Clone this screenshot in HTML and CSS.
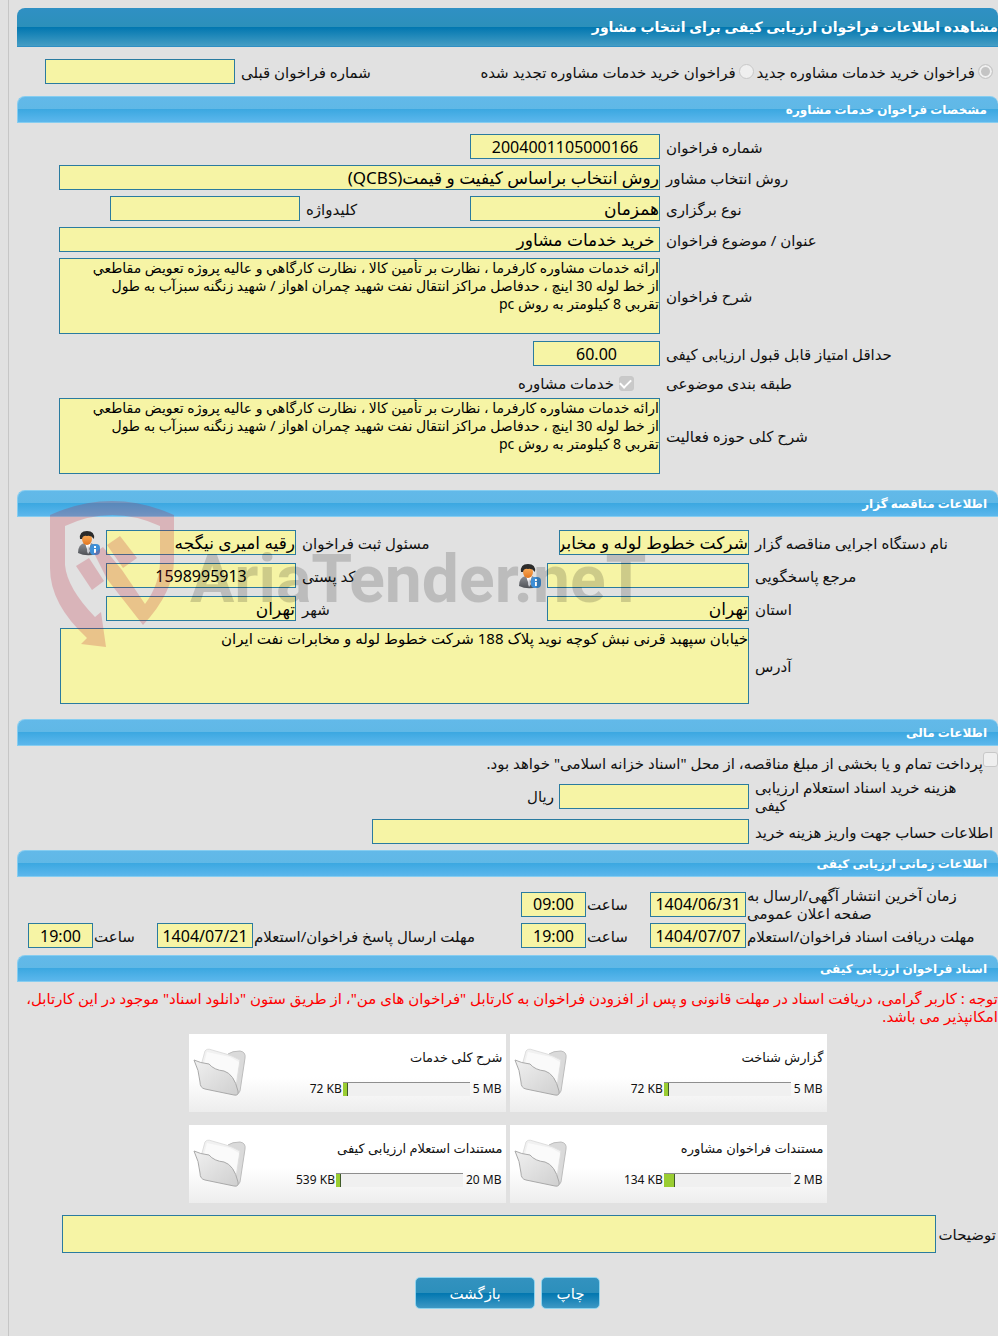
FILE: index.html
```html
<!DOCTYPE html>
<html lang="fa" dir="rtl">
<head>
    <meta charset="UTF-8">
    <meta name="viewport" content="width=device-width, initial-scale=1.0">
    <title>مشاهده اطلاعات فراخوان ارزیابی کیفی</title>
    <link rel="stylesheet" href="styles.css">
</head>
<body>
    <!-- shared icons -->
    <svg class="sprite" aria-hidden="true">
        <defs>
            <linearGradient id="folderFront" x1="0" y1="0" x2="1" y2="1">
                <stop offset="0" stop-color="#f0f0f0"/>
                <stop offset="1" stop-color="#cfcfcf"/>
            </linearGradient>
            <linearGradient id="suit" x1="0" y1="0" x2="0" y2="1">
                <stop offset="0" stop-color="#8d8f94"/>
                <stop offset="1" stop-color="#4e5156"/>
            </linearGradient>
            <linearGradient id="face" x1="0" y1="0" x2="0" y2="1">
                <stop offset="0" stop-color="#ffb765"/>
                <stop offset="1" stop-color="#e3761f"/>
            </linearGradient>
        </defs>
        <symbol id="folder" viewBox="0 0 56 50">
            <path d="M36 6 Q40 3 48 3 Q54 4 53 10 L48 43 Q47 46 44 46 L32 20z" fill="#dadada" stroke="#bdbdbd"/>
            <path d="M10 14 L13 3 Q15 0 20 2 L34 6 L40 8 L48 12 L44 40 L12 30z" fill="#f1f1f1" stroke="#dedede"/>
            <path d="M12 15 L15 4 L38 9 L47 14 L43 38z" fill="#fafafa"/>
            <path d="M2 12 Q8 15 17 16 Q22 22 32 23 Q42 26 46 43 Q47 48 42 47 L13 41 Q8 40 8 34 Q7 22 2 12z" fill="url(#folderFront)" stroke="#a9a9a9"/>
        </symbol>
        <symbol id="person" viewBox="0 0 24 26">
            <path d="M1 23 Q1 14 8 13 L14 13 Q20 15 20 24 Q9 27 1 23z" fill="url(#suit)"/>
            <path d="M8 13 L11 22 L14 13z" fill="#fff"/>
            <path d="M11 15 L10 21 L11 24 L13 21z" fill="#c9ccd2"/>
            <ellipse cx="10" cy="9" rx="5" ry="6" fill="url(#face)"/>
            <path d="M3 9 Q2 1 10 1 Q18 1 17 9 Q14 5 10 6 Q6 5 5 9z" fill="#2b2b2b"/>
            <rect x="13" y="14" width="10" height="11" rx="4" fill="#3f8fd6"/>
            <path d="M18 16v2 M18 19v4" stroke="#fff" stroke-width="2"/>
        </symbol>
    </svg>

    <main class="panel">
        <h1 class="title">مشاهده اطلاعات فراخوان ارزیابی کیفی برای انتخاب مشاور</h1>

        <div class="type-row">
            <input type="radio" name="type" id="typeNew" checked disabled>
            <label for="typeNew">فراخوان خرید خدمات مشاوره جدید</label>
            <input type="radio" name="type" id="typeRenew" class="second" disabled>
            <label for="typeRenew">فراخوان خرید خدمات مشاوره تجدید شده</label>
            <label for="prevNo" class="prev-label">شماره فراخوان قبلی</label>
            <input type="text" id="prevNo" class="w190" readonly>
        </div>

        <h2 class="bar">مشخصات فراخوان خدمات مشاوره</h2>
        <section class="grid spec">
            <label for="callNo">شماره فراخوان</label>
            <input type="text" id="callNo" class="num" value="2004001105000166" readonly>

            <label for="method" class="first">روش انتخاب مشاور</label>
            <input type="text" id="method" class="wide" value="روش انتخاب براساس کیفیت و قیمت(QCBS)" readonly>

            <label for="holding" class="first">نوع برگزاری</label>
            <input type="text" id="holding" value="همزمان" readonly>
            <label for="keyword">کلیدواژه</label>
            <input type="text" id="keyword" readonly>

            <label for="subject" class="first">عنوان / موضوع فراخوان</label>
            <input type="text" id="subject" class="wide" value=" خرید خدمات مشاور" readonly>

            <label for="desc" class="first">شرح فراخوان</label>
            <textarea id="desc" class="wide" readonly>ارائه خدمات مشاوره کارفرما ، نظارت بر تأمين کالا ، نظارت کارگاهي و عاليه پروژه تعويض مقاطعي
از خط لوله 30 اينچ ، حدفاصل مراکز انتقال نفت شهيد چمران اهواز / شهيد زنگنه سبزآب به طول
تقربي 8 کيلومتر به روش pc</textarea>

            <label for="minScore" class="first">حداقل امتیاز قابل قبول ارزیابی کیفی</label>
            <div class="wide score">
                <input type="text" id="minScore" class="num" value="60.00" readonly>
            </div>

            <span class="label first">طبقه بندی موضوعی</span>
            <div class="wide topic">
                <input type="checkbox" id="topic" checked disabled>
                <label for="topic">خدمات مشاوره</label>
            </div>

            <label for="scope" class="first">شرح کلی حوزه فعالیت</label>
            <textarea id="scope" class="wide" readonly>ارائه خدمات مشاوره کارفرما ، نظارت بر تأمين کالا ، نظارت کارگاهي و عاليه پروژه تعويض مقاطعي
از خط لوله 30 اينچ ، حدفاصل مراکز انتقال نفت شهيد چمران اهواز / شهيد زنگنه سبزآب به طول
تقربي 8 کيلومتر به روش pc</textarea>
        </section>

        <div class="owner-wrap">
            <h2 class="bar">اطلاعات مناقصه گزار</h2>
            <section class="grid owner">
                <label for="org">نام دستگاه اجرایی مناقصه گزار</label>
                <div class="cell"><input type="text" id="org" class="w190" value="شرکت خطوط لوله و مخابرات نفت ایران" readonly></div>
                <label for="registrar">مسئول ثبت فراخوان</label>
                <div class="cell">
                    <input type="text" id="registrar" class="w190" value="رقیه امیری نیگجه" readonly>
                    <svg class="person"><use href="#person"/></svg>
                </div>

                <label for="contact">مرجع پاسخگویی</label>
                <div class="cell">
                    <input type="text" id="contact" class="w202" readonly>
                    <svg class="person"><use href="#person"/></svg>
                </div>
                <label for="postal">کد پستی</label>
                <div class="cell"><input type="text" id="postal" class="w190 num" value="1598995913" readonly></div>

                <label for="province">استان</label>
                <div class="cell"><input type="text" id="province" class="w202" value="تهران" readonly></div>
                <label for="city">شهر</label>
                <div class="cell"><input type="text" id="city" class="w190" value="تهران" readonly></div>

                <label for="address">آدرس</label>
                <textarea id="address" class="wide" readonly>خیابان سپهبد قرنی نبش کوچه نوید پلاک 188 شرکت خطوط لوله و مخابرات نفت ایران</textarea>
            </section>

            <svg class="watermark" viewBox="0 0 610 150" aria-hidden="true">
                <g fill="#c01830" opacity=".22">
                    <path d="M0 15 Q62 -13 124 15 L124 60 Q124 92 93 125 L57 79 L44 53 L53 47 L72 70 L95 104 Q110 84 110 60 L110 26 Q62 4 15 26 L15 65 Q17 88 45 117 L51 112 L56 147 L31 144 L37 138 Q0 104 0 68z"/>
                    <path d="M26 66 L39 58 L54 81 L42 90z"/>
                    <path d="M57 45 L70 36 L87 58 L73 68z"/>
                </g>
                <text x="140" y="102" direction="ltr">AriaTender.neT</text>
            </svg>
        </div>

        <h2 class="bar">اطلاعات مالی</h2>
        <section class="finance">
            <div class="treasury">
                <input type="checkbox" id="treasury" disabled>
                <label for="treasury">پرداخت تمام و یا بخشی از مبلغ مناقصه، از محل "اسناد خزانه اسلامی" خواهد بود.</label>
            </div>
            <div class="grid money">
                <label for="docPrice">هزینه خرید اسناد استعلام ارزیابی<br>کیفی</label>
                <div class="cell"><input type="text" id="docPrice" class="w190" readonly> <span>ریال</span></div>
                <label for="account">اطلاعات حساب جهت واریز هزینه خرید</label>
                <div class="cell"><input type="text" id="account" class="w377" readonly></div>
            </div>
        </section>

        <h2 class="bar">اطلاعات زمانی ارزیابی کیفی</h2>
        <section class="grid times">
            <label for="d1">زمان آخرین انتشار آگهی/ارسال به<br>صفحه اعلان عمومی</label>
            <input type="text" id="d1" class="num" value="1404/06/31" readonly>
            <label for="t1">ساعت</label>
            <input type="text" id="t1" class="num" value="09:00" readonly>

            <label for="d2" class="first">مهلت دریافت اسناد فراخوان/استعلام</label>
            <input type="text" id="d2" class="num" value="1404/07/07" readonly>
            <label for="t2">ساعت</label>
            <input type="text" id="t2" class="num" value="19:00" readonly>
            <label for="d3">مهلت ارسال پاسخ فراخوان/استعلام</label>
            <input type="text" id="d3" class="num" value="1404/07/21" readonly>
            <label for="t3">ساعت</label>
            <input type="text" id="t3" class="num" value="19:00" readonly>
        </section>

        <h2 class="bar">اسناد فراخوان ارزیابی کیفی</h2>
        <p class="notice">توجه : کاربر گرامی، دریافت اسناد در مهلت قانونی و پس از افزودن فراخوان به کارتابل "فراخوان های من"، از طریق ستون "دانلود اسناد" موجود در این کارتابل، امکانپذیر می باشد.</p>

        <div class="docs">
            <article class="doc">
                <div class="doc-info">
                    <h3>گزارش شناخت</h3>
                    <div class="usage"><span>5 MB</span><div class="meter"><div class="used" style="width: 4%"></div></div><span>72 KB</span></div>
                </div>
                <svg class="folder"><use href="#folder"/></svg>
            </article>
            <article class="doc">
                <div class="doc-info">
                    <h3>شرح کلی خدمات</h3>
                    <div class="usage"><span>5 MB</span><div class="meter"><div class="used" style="width: 4%"></div></div><span>72 KB</span></div>
                </div>
                <svg class="folder"><use href="#folder"/></svg>
            </article>
            <article class="doc">
                <div class="doc-info">
                    <h3>مستندات فراخوان مشاوره</h3>
                    <div class="usage"><span>2 MB</span><div class="meter"><div class="used" style="width: 9%"></div></div><span>134 KB</span></div>
                </div>
                <svg class="folder"><use href="#folder"/></svg>
            </article>
            <article class="doc">
                <div class="doc-info">
                    <h3>مستندات استعلام ارزیابی کیفی</h3>
                    <div class="usage"><span>20 MB</span><div class="meter"><div class="used" style="width: 4%"></div></div><span>539 KB</span></div>
                </div>
                <svg class="folder"><use href="#folder"/></svg>
            </article>
        </div>

        <div class="notes">
            <label for="notes">توضیحات</label>
            <textarea id="notes" readonly></textarea>
        </div>

        <div class="actions">
            <button type="button" class="print">چاپ</button>
            <button type="button" class="back">بازگشت</button>
        </div>
    </main>
</body>
</html>
```

FILE: styles.css
```css
* {
    margin: 0;
    padding: 0;
    box-sizing: border-box;
}

body {
    background: #e1e1e1;
    color: #111;
    font-family: Tahoma, "Noto Sans", "DejaVu Sans", sans-serif;
    font-size: 15px;
    line-height: 18px;
    overflow-x: hidden;
}

.sprite {
    position: absolute;
    width: 0;
    height: 0;
}

.panel {
    min-height: 100vh;
    margin-left: 8px;
    padding: 8px 0 27px 8px;
    border-left: 1px solid #c6c6c6;
}

.title {
    height: 39px;
    line-height: 38px;
    font-size: 14px;
    color: #fff;
    white-space: nowrap;
    border-radius: 8px 8px 0 0;
    border-bottom: 1px solid #2f8fc4;
    background: linear-gradient(#2f90c4, #2c90ba 50%, #0277b0 51%, #459dc4);
}

.bar {
    height: 27px;
    line-height: 25px;
    padding-right: 11px;
    font-size: 12px;
    color: #fff;
    border: 1px solid #86cdf0;
    border-right: 0;
    border-radius: 8px 8px 0 0;
    background: linear-gradient(#62b9e9, #60b8e6 48%, #3ca8e1 50%, #5cb7ec);
}

label,
.label {
    text-align: left;
}

input[type="text"],
textarea {
    display: block;
    min-width: 0;
    width: 100%;
    height: 25px;
    border: 1px solid #2a7b9f;
    background: #f6f4a5;
    color: #000;
    font-family: inherit;
    font-size: 17px;
    resize: none;
    outline: none;
}

textarea {
    height: 76px;
    font-size: 15px;
    line-height: 18px;
    overflow: hidden;
}

input[type="text"].num {
    font-size: 16px;
    text-align: center;
}

input.w190 {
    width: 190px;
}

input.w202 {
    width: 202px;
}

input.w377 {
    width: 377px;
}

input[type="radio"],
input[type="checkbox"] {
    appearance: none;
    flex: none;
    width: 15px;
    height: 15px;
    border: 1px solid #c8c8c8;
    background: #efefef;
}

input[type="radio"] {
    border-radius: 50%;
}

input[type="radio"]:checked {
    background: #c4c4c4;
    box-shadow: inset 0 0 0 2px #efefef;
}

input[type="checkbox"] {
    border-radius: 3px;
}

input[type="checkbox"]:checked {
    background: #c9c9c9;
}

input[type="checkbox"]:checked::before {
    content: "";
    display: block;
    width: 5px;
    height: 9px;
    margin: 0 4px;
    border: solid #fff;
    border-width: 0 2px 2px 0;
    transform: rotate(45deg);
}

.type-row {
    display: flex;
    align-items: center;
    gap: 3px;
    padding: 12px 5px 12px 28px;
    white-space: nowrap;
}

.type-row .prev-label {
    flex: 1;
    margin-left: 3px;
}

.grid {
    display: grid;
    align-items: center;
    gap: 6px;
}

.first {
    grid-column-start: 1;
}

.wide {
    grid-column: 2 / -1;
}

.cell {
    display: flex;
    align-items: center;
    gap: 5px;
}

.spec {
    grid-template-columns: 332px 190px 1fr 190px 45px;
    padding: 11px 0 16px 42px;
}

.spec textarea {
    font-size: 14px;
}

.score {
    padding: 1px 0 2px;
}

.score input.num {
    width: 127px;
}

.topic {
    display: flex;
    align-items: center;
    gap: 5px;
    padding-right: 26px;
}

.owner-wrap {
    position: relative;
}

.owner {
    grid-template-columns: 243px 231px 1fr 236px;
    padding: 12px 0 15px 43px;
}

.owner .cell {
    min-height: 27px;
}

.person {
    width: 24px;
    height: 26px;
}

.watermark {
    position: absolute;
    left: 33px;
    top: 10px;
    width: 610px;
    height: 150px;
    pointer-events: none;
}

.watermark text {
    font-family: Roboto, sans-serif;
    font-size: 66px;
    font-weight: bold;
    fill: #000;
    opacity: .16;
}

.finance {
    padding: 6px 0;
}

.treasury {
    display: flex;
    height: 20px;
    margin-bottom: 6px;
}

.treasury label {
    line-height: 22px;
}

.money {
    grid-template-columns: 243px 1fr;
    row-gap: 5px;
}

.times {
    grid-template-columns: 251px 96px 62px 65px 1fr 96px 62px 65px;
    gap: 1px;
    padding: 9px 0 7px 11px;
}

.notice {
    padding: 7px 0 9px 7px;
    color: #f00;
}

.docs {
    display: flex;
    flex-wrap: wrap;
    justify-content: center;
    gap: 13px 4px;
    max-width: 720px;
    margin: 0 auto;
}

.doc {
    display: flex;
    width: 317px;
    height: 78px;
    padding: 14px 3px;
    background: linear-gradient(#fff 55%, #ededed);
    font-size: 12px;
}

.doc-info {
    flex: 1;
}

.doc h3 {
    font-size: 13px;
    font-weight: normal;
    margin-bottom: 14px;
}

.usage {
    display: flex;
    align-items: center;
}

.usage span {
    direction: ltr;
    padding: 0 1px;
}

.meter {
    width: 127px;
    height: 14px;
    margin-right: 2px;
    border-top: 1px solid #8e8e8e;
    background: #f0f0f0;
    direction: ltr;
}

.used {
    height: 13px;
    background: #9acd32;
    border-right: 1px solid #3f5a2a;
}

.folder {
    width: 56px;
    height: 50px;
}

.notes {
    display: flex;
    align-items: center;
    gap: 2px;
    padding: 12px 2px 24px 45px;
}

.notes textarea {
    flex: 1;
    height: 38px;
}

.actions {
    display: flex;
    justify-content: center;
    gap: 6px;
}

.actions button {
    height: 32px;
    border: 1px solid #8fd3ee;
    border-radius: 5px;
    background: linear-gradient(#3392bf, #2c8fbb 50%, #0277b0 51%, #3d98c4);
    color: #fff;
    font-family: inherit;
    font-size: 15px;
}

.print {
    width: 59px;
}

.back {
    width: 120px;
}
```
